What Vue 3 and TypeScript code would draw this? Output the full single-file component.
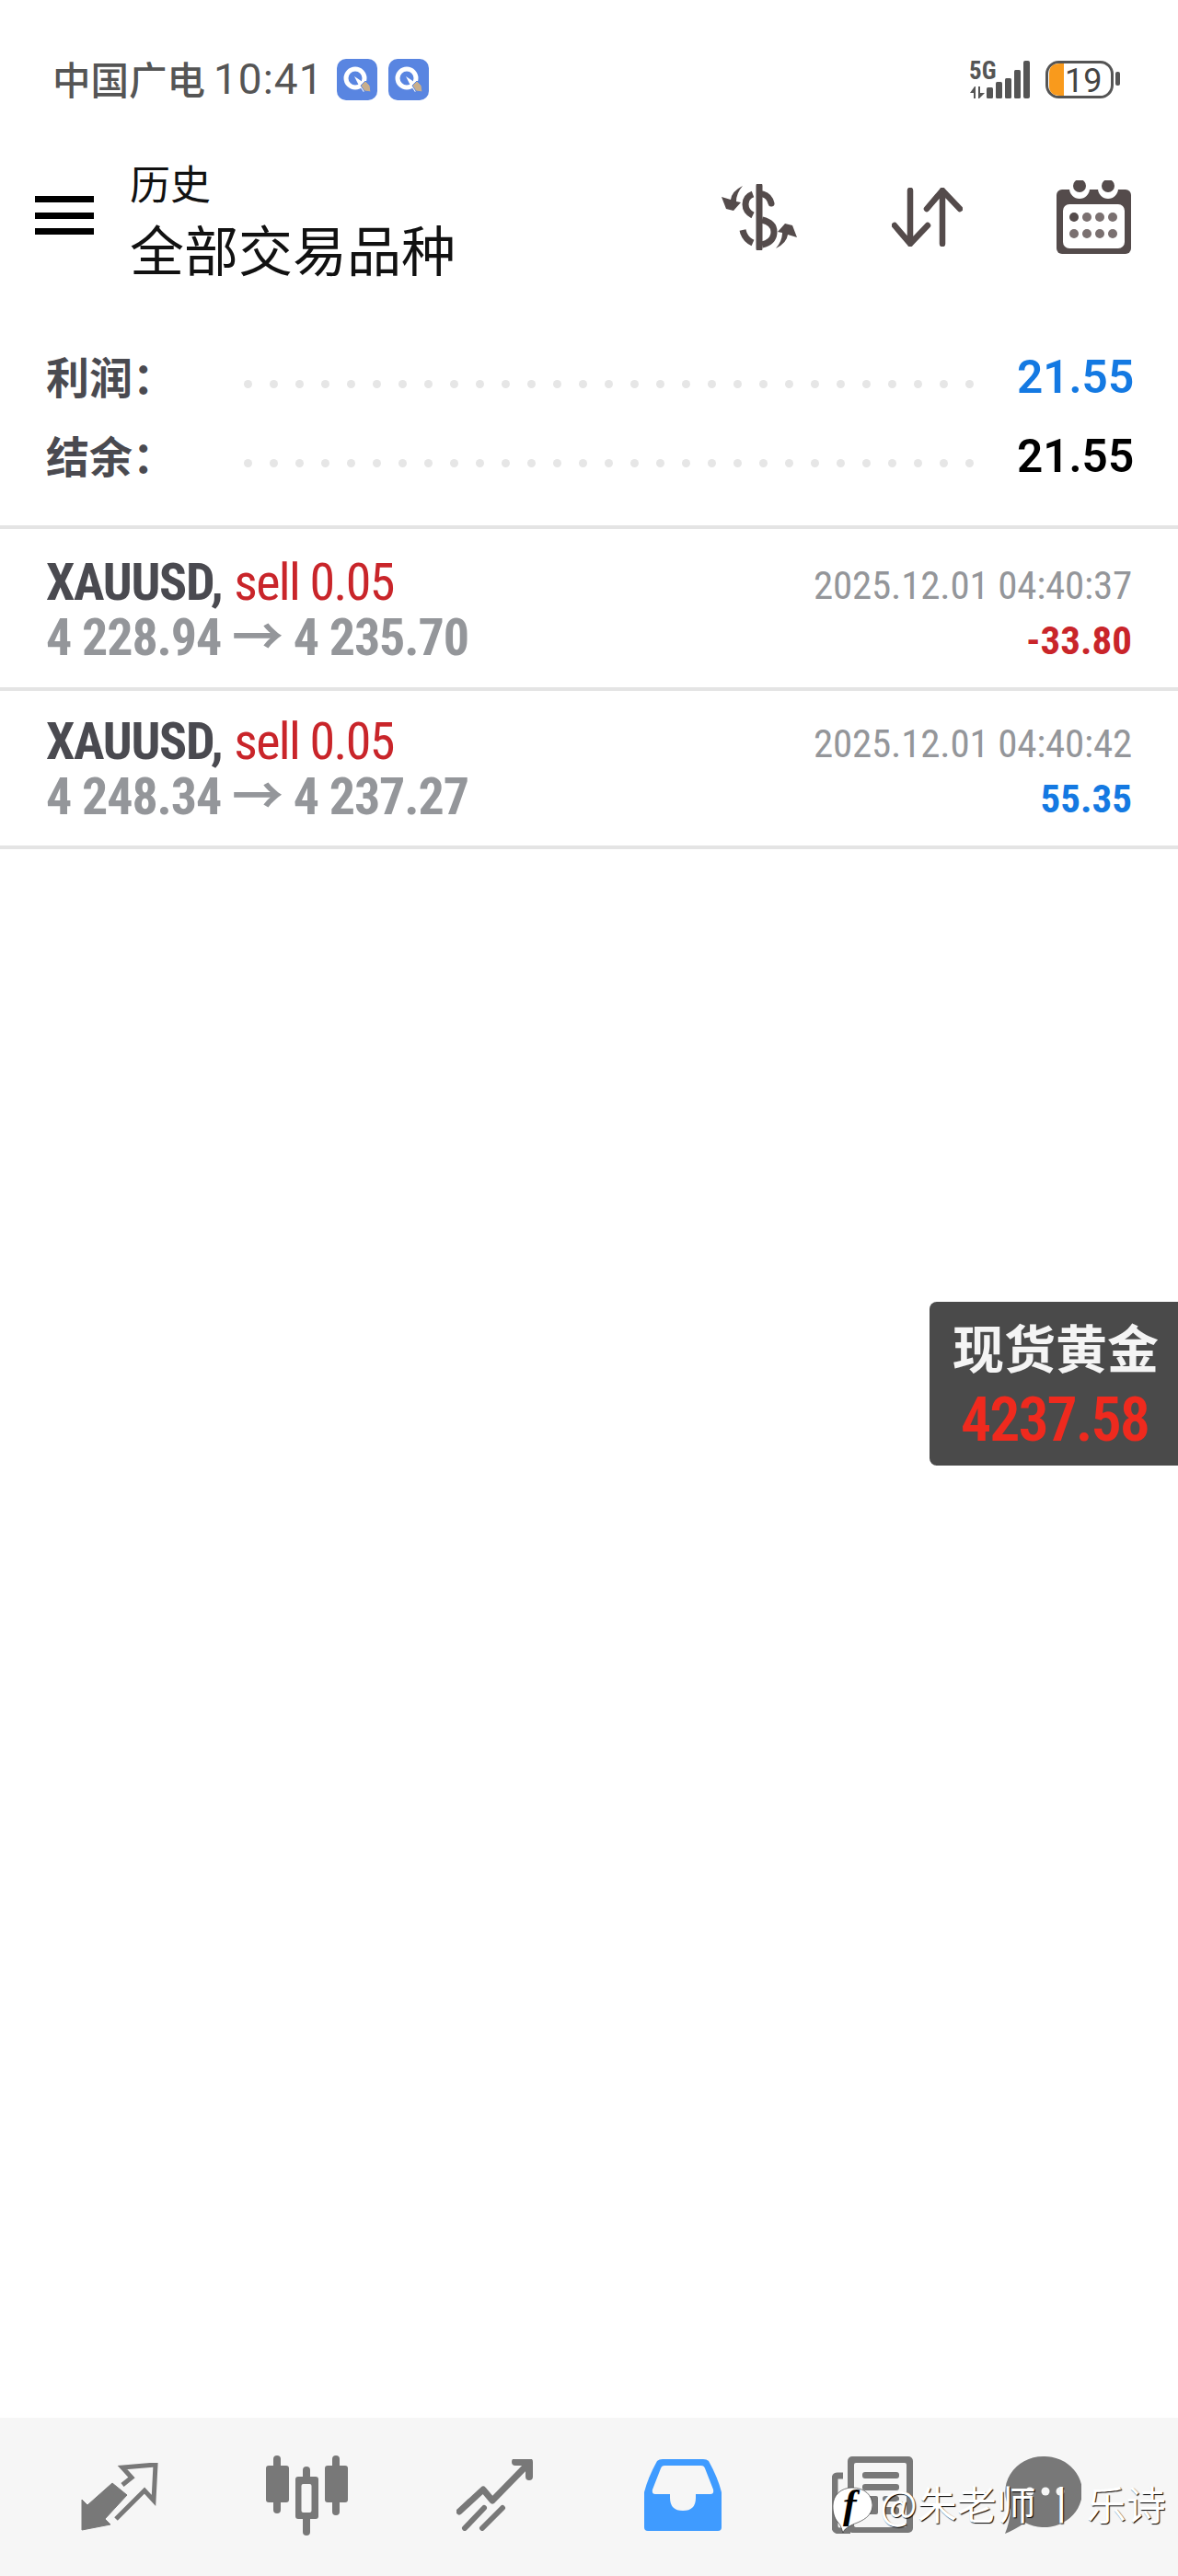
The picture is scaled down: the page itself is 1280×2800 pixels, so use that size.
<script setup lang="ts">
interface Trade { sym: string; side: string; path: string; time: string; profit: string; loss: boolean }
const trades: Trade[] = [
  { sym: 'XAUUSD,', side: 'sell 0.05', path: '4 228.94 → 4 235.70', time: '2025.12.01 04:40:37', profit: '-33.80', loss: true },
  { sym: 'XAUUSD,', side: 'sell 0.05', path: '4 248.34 → 4 237.27', time: '2025.12.01 04:40:42', profit: '55.35', loss: false },
]
const dots = Array.from({ length: 29 }, (_, i) => i)
</script>

<template>
  <div class="page">
    <div class="status">
      <div class="status-left">
        <span class="carrier">中国广电</span>
        <span class="clock">10:41</span>
        <svg v-for="n in 2" :key="n" class="notif" width="44" height="45" viewBox="0 0 44 45">
          <rect width="44" height="45" rx="10" fill="#5985e1" />
          <circle cx="20" cy="21" r="10" fill="none" stroke="#fff" stroke-width="5" />
          <path d="M19 19L25 23L34 30L29 36L23 27Z" fill="#fff" />
          <path d="M26 29L31 24L36 29L37 36L30 35Z" fill="#c8ae8c" stroke="#5985e1" stroke-width="1" />
        </svg>
      </div>
      <div class="status-right">
        <svg width="168" height="54" viewBox="0 -5 168 54">
          <text x="1" y="21" class="five-g">5G</text>
          <path d="M7 29L2 36H6V42H8V29ZM12 42L18 36H13V29H11V42Z" fill="#555" />
          <rect x="20" y="30" width="7" height="12" rx="1.5" fill="#555" />
          <rect x="30" y="24" width="7" height="18" rx="1.5" fill="#555" />
          <rect x="40" y="20" width="7" height="22" rx="1.5" fill="#555" />
          <rect x="50" y="11" width="7" height="31" rx="1.5" fill="#555" />
          <rect x="60" y="1" width="7" height="41" rx="2" fill="#555" />
          <rect x="85.5" y="2.5" width="71" height="38" rx="13" fill="#fff" stroke="#555" stroke-width="3" />
          <path d="M88 15Q88 4 100 4H104V39H100Q88 39 88 28Z" fill="#f99a1c" />
          <text x="105" y="35" class="batt">19</text>
          <rect x="160" y="13" width="5" height="15" rx="2" fill="#555" />
        </svg>
      </div>
    </div>

    <header class="toolbar">
      <div class="burger"><i></i><i></i><i></i></div>
      <div class="titles">
        <div class="t1">历史</div>
        <div class="t2">全部交易品种</div>
      </div>
      <svg class="ic-dollar" width="84" height="72" viewBox="0 0 84 72">
        <g fill="none" stroke="#544b4b" stroke-width="7" stroke-linecap="round">
          <path d="M42 2V70" />
          <path d="M46 11Q53 13 55 21" />
          <path d="M35 11Q27 14 27 22Q27 30 35 34" stroke-linecap="butt" />
          <path d="M45 39Q58 42 58 52Q58 63 45 66" stroke-linecap="butt" />
          <path d="M35 64Q26 60 24 50" stroke-linecap="butt" />
        </g>
        <path d="M24 2Q12 8 11 17L1 14L6 27L14 29L22 20L17 19Q17 10 24 2Z" fill="#544b4b" />
        <path d="M24 2Q12 8 11 17L1 14L6 27L14 29L22 20L17 19Q17 10 24 2Z" fill="#544b4b" transform="rotate(180 42 36)" />
      </svg>
      <svg class="ic-sort" width="77" height="64" viewBox="0 0 77 64">
        <g fill="none" stroke="#544b4b" stroke-width="6.5" stroke-linecap="round" stroke-linejoin="round">
          <path d="M20 3V61M3 41L20 61L39 41" />
          <path d="M55 61V3M38 23L55 3L74 23" />
        </g>
      </svg>
      <svg class="ic-cal" width="81" height="80" viewBox="0 0 81 80">
        <rect y="10" width="81" height="70" rx="6" fill="#544b4b" />
        <rect x="7" y="26" width="67" height="48" rx="7" fill="#fff" />
        <circle cx="25" cy="9" r="11" fill="#fff" />
        <circle cx="56" cy="9" r="11" fill="#fff" />
        <circle cx="25" cy="6" r="7" fill="#544b4b" />
        <circle cx="56" cy="6" r="7" fill="#544b4b" />
        <circle cx="19" cy="40" r="5" fill="#544b4b" />
        <circle cx="33" cy="40" r="5" fill="#7a7070" />
        <circle cx="47" cy="40" r="5" fill="#7a7070" />
        <circle cx="61" cy="40" r="5" fill="#7a7070" />
        <circle cx="19" cy="58" r="5" fill="#7a7070" />
        <circle cx="33" cy="58" r="5" fill="#7a7070" />
        <circle cx="47" cy="58" r="5" fill="#7a7070" />
        <circle cx="61" cy="58" r="5" fill="#7a7070" />
      </svg>
    </header>

    <section class="summary">
      <div class="sum-row">
        <span class="sum-label">利润：</span>
        <span class="leader"><b v-for="d in dots" :key="d"></b></span>
        <span class="sum-val blue">21.55</span>
      </div>
      <div class="sum-row">
        <span class="sum-label">结余：</span>
        <span class="leader"><b v-for="d in dots" :key="d"></b></span>
        <span class="sum-val">21.55</span>
      </div>
    </section>

    <section class="trades">
      <article v-for="t in trades" :key="t.time" class="trade">
        <div class="col">
          <div class="line1"><span class="sym">{{ t.sym }}</span> <span class="side">{{ t.side }}</span></div>
          <div class="line2">{{ t.path }}</div>
        </div>
        <div class="col right">
          <div class="time">{{ t.time }}</div>
          <div class="profit" :class="t.loss ? 'red' : 'blue'">{{ t.profit }}</div>
        </div>
      </article>
    </section>

    <div class="spacer"></div>

    <nav class="tabs">
      <svg class="tab-a" width="84" height="74" viewBox="0 0 84 74">
        <path d="M1 73V40L7 46L34 22L50 35L26 61L32 67Z" fill="#787878" stroke="#787878" stroke-width="1" stroke-linejoin="round" />
        <path d="M45 24L55 16L45 5L81 2L79 41L69 30L38 61" fill="none" stroke="#787878" stroke-width="5" />
      </svg>
      <svg class="tab-b" width="89" height="88" viewBox="0 0 89 88">
        <g fill="#787878">
          <rect x="8" y="0" width="8" height="63" rx="4" />
          <rect x="0" y="11" width="25" height="40" rx="3" />
          <rect x="72" y="0" width="8" height="65" rx="4" />
          <rect x="64" y="11" width="25" height="40" rx="3" />
          <rect x="40" y="12" width="8" height="75" rx="4" />
          <rect x="32" y="23" width="25" height="46" rx="3" />
        </g>
        <rect x="38.5" y="31" width="11" height="31" rx="2" fill="#f6f6f6" />
      </svg>
      <svg class="tab-c" width="84" height="78" viewBox="0 0 84 78">
        <g fill="none" stroke="#787878" stroke-linecap="round" stroke-linejoin="round">
          <path d="M3 57L29 33L39 45L78 5" stroke-width="7" />
          <path d="M64 3H79V19" stroke-width="8" />
          <path d="M9 75L30 53M28 75L50 53" stroke-width="6" />
        </g>
      </svg>
      <svg class="tab-d" width="84" height="78" viewBox="0 0 84 78">
        <path d="M14 2Q16 0 20 0H64Q68 0 70 2Q80 20 84 36V74Q84 78 80 78H4Q0 78 0 74V36Q4 20 14 2Z" fill="#3f9bff" />
        <path d="M22 7H62Q65 7 66 10L75 33Q76 38 72 38H56V42Q56 56 42 56Q28 56 28 42V38H12Q8 38 9 33L18 10Q19 7 22 7Z" fill="#f6f6f6" />
      </svg>
      <svg class="tab-e" width="88" height="84" viewBox="0 0 88 84">
        <rect x="17" y="0" width="71" height="83" rx="5" fill="#787878" />
        <rect x="24" y="7" width="57" height="70" rx="2" fill="#f6f6f6" />
        <path d="M12 21H6Q3 21 3 25V76Q3 81 9 81H20" fill="none" stroke="#787878" stroke-width="7" />
        <rect x="33" y="17" width="40" height="7" rx="3" fill="#787878" />
        <rect x="33" y="30" width="40" height="7" rx="3" fill="#787878" />
        <rect x="33" y="43" width="17" height="20" rx="2" fill="#787878" />
        <rect x="55" y="43" width="18" height="6" rx="3" fill="#787878" />
        <rect x="55" y="55" width="18" height="8" rx="3" fill="#787878" />
      </svg>
      <svg class="tab-f" width="83" height="84" viewBox="0 0 83 84">
        <path d="M41.5 0A41.5 38.5 0 1 1 22 72Q10 80 0 84Q5 72 6 58A41.5 38.5 0 0 1 41.5 0Z" fill="#787878" />
        <circle cx="27" cy="38" r="4.5" fill="#f6f6f6" />
        <circle cx="44" cy="38" r="4.5" fill="#f6f6f6" />
        <circle cx="60" cy="38" r="4.5" fill="#f6f6f6" />
      </svg>
    </nav>

    <aside class="quote">
      <div class="q-name">现货黄金</div>
      <div class="q-price">4237.58</div>
    </aside>

    <div class="mark">
      <span class="mark-logo">
        <svg width="43" height="50" viewBox="0 0 43 50">
          <path d="M21 1C34 1 43 9 43 20C43 32 32 37 24 40C17 43 12 46 11 50C9 44 8 41 5 38C1 33 0 27 0 21C0 9 9 1 21 1Z" fill="#fff" stroke="#222" stroke-width=".6" />
        </svg>
        <em>f</em>
      </span>
      <span class="mark-text">@朱老师<span class="mark-sep">丨</span>乐诗</span>
    </div>
  </div>
</template>

<style scoped>
.page {
  position: relative;
  width: 1280px;
  height: 2800px;
  background: #fff;
  display: flex;
  flex-direction: column;
  overflow: hidden;
  font-family: Roboto, "Noto Sans CJK SC", sans-serif;
}
.status {
  height: 45px;
  margin-top: 64px;
  padding: 0 60px 0 57px;
  display: flex;
  justify-content: space-between;
  align-items: center;
}
.status-left { display: flex; align-items: center; }
.carrier { font: 500 41.5px/45px "Noto Sans CJK SC", sans-serif; color: #555; margin-right: 9px; margin-top: -2px; }
.clock { font: 400 46px/45px Roboto, sans-serif; color: #555; letter-spacing: 1px; margin-right: 14px; }
.notif { margin-right: 12px; }
.status-right { display: flex; align-items: center; }
.five-g { font: 700 27px Roboto, sans-serif; font-stretch: 75%; fill: #555; }
.batt { font: 400 36px Roboto, sans-serif; fill: #444; }

.toolbar {
  margin-top: 65px;
  height: 120px;
  display: flex;
  align-items: center;
  padding: 0 51px 0 38px;
}
.burger { width: 64px; height: 42px; display: flex; flex-direction: column; justify-content: space-between; margin-right: 39px; }
.burger i { display: block; height: 7px; background: #000; }
.titles { flex: 1; margin-top: 6px; font-family: "Noto Sans CJK SC", sans-serif; color: #111; }
.t1 { font-size: 44px; line-height: 60px; height: 68px; margin-top: -2px; }
.t2 { font-size: 59px; line-height: 68px; white-space: nowrap; }
.ic-dollar { margin-right: 102px; margin-top: 3px; }
.ic-sort { margin-right: 102px; margin-top: 3px; }
.ic-cal { margin-top: 3px; }

.summary { margin-top: 71px; padding: 0 50px; height: 206px; }
.sum-row { height: 86px; display: flex; align-items: center; }
.sum-label { font: 700 47px/86px "Noto Sans CJK SC", sans-serif; color: #4a4a50; width: 215px; white-space: nowrap; }
.leader { flex: 1; display: flex; gap: 19px; overflow: hidden; height: 9px; margin-top: 18px; }
.leader b { flex: none; width: 9px; height: 9px; border-radius: 50%; background: #e6e6e6; }
.sum-val { width: 125px; margin-left: 24px; margin-top: 4px; text-align: right; font: 600 49.5px Roboto, sans-serif; color: #000; }
.blue { color: #1479e2; }
.red { color: #c9252a; }
.sum-val.blue { color: #1479e2; }

.trades { border-top: 4px solid #e4e4e4; }
.trade {
  box-sizing: border-box;
  height: 176px;
  border-bottom: 4px solid #e4e4e4;
  padding: 0 50px;
  display: flex;
  justify-content: space-between;
  align-items: flex-start;
}
.col { display: flex; flex-direction: column; padding-top: 28px; }
.right { align-items: flex-end; padding-top: 31px; }
.trade + .trade { height: 172px; }
.trade + .trade .col { padding-top: 25px; }
.trade + .trade .right { padding-top: 27px; }
.line1, .line2, .time, .profit { font-stretch: 75%; white-space: nowrap; }
.line1, .line2 { font-size: 56px; line-height: 60px; }
.sym { font-weight: 700; color: #4a4a50; letter-spacing: -1.3px; }
.side { font-weight: 400; color: #c9252a; letter-spacing: -1.6px; }
.line2 { font-weight: 700; color: #94969a; letter-spacing: -1.1px; }
.time { font-size: 43px; line-height: 60px; color: #94969a; letter-spacing: -.2px; }
.profit { font-size: 43px; line-height: 60px; font-weight: 700; }
.spacer { flex: 1; }

.tabs {
  height: 172px;
  background: #f6f6f6;
  display: flex;
  align-items: center;
  padding-left: 88px;
}
.tab-b { margin-left: 117px; margin-top: -2px; }
.tab-c { margin-left: 118px; margin-top: -4px; }
.tab-d { margin-left: 120px; margin-top: -4px; }
.tab-e { margin-left: 120px; margin-top: -4px; }
.tab-f { margin-left: 100px; margin-top: -4px; }

.quote {
  position: absolute;
  right: 0;
  top: 1415px;
  width: 270px;
  height: 178px;
  background: #4a4a4a;
  border-radius: 8px 0 0 8px;
  padding-left: 25px;
  box-sizing: border-box;
}
.q-name { font: 700 56px/60px "Noto Sans CJK SC", sans-serif; color: #f4f4f4; margin-top: 18px; white-space: nowrap; }
.q-price { font: 600 66px/72px Roboto, sans-serif; font-stretch: 75%; letter-spacing: -2px; color: #ef2a1e; margin: 15px 0 0 9px; white-space: nowrap; }

.mark { position: absolute; left: 905px; top: 2698px; display: flex; align-items: center; height: 60px; }
.mark-logo { position: relative; width: 43px; height: 50px; margin-right: 8px; display: block; }
.mark-logo em { position: absolute; left: 11px; top: -6px; font: italic 700 44px "Liberation Serif", serif; color: #000; }
.mark-text { font: 400 43px "Noto Sans CJK SC", sans-serif; color: #fff; text-shadow: 1px 1px 1px #000; white-space: nowrap; margin-top: -16px; }
.mark-sep { margin: 0 6px; }
</style>
